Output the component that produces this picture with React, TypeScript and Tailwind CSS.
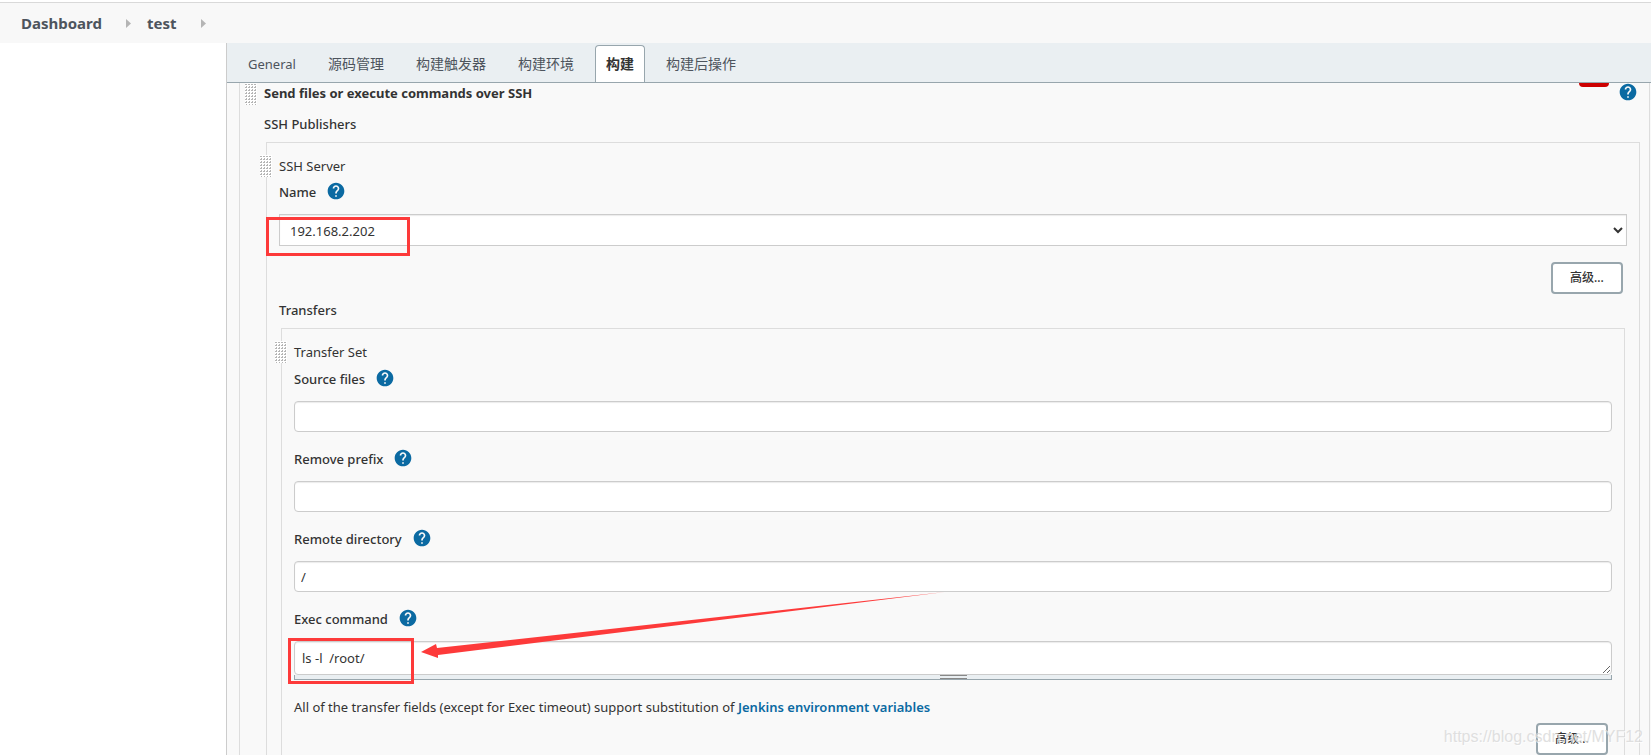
import { useId, useState } from 'react'
import type { ReactNode } from 'react'
import { MdHelp } from 'react-icons/md'

const TABS = ['General', '源码管理', '构建触发器', '构建环境', '构建', '构建后操作']

export default function App() {
    const [activeTab, setActiveTab] = useState('构建')

    return (
        <div className="flex flex-col h-screen overflow-hidden bg-white pt-0.5 font-['Noto_Sans','Noto_Sans_CJK_SC',sans-serif] text-[13px] leading-5 text-[#333]">
            <Breadcrumbs />
            <div className="flex flex-1 min-h-0">
                <aside className="w-[226px] shrink-0" />
                <main className="flex flex-col flex-1 min-w-0 border-l border-[#ccc] bg-[#f9f9f9]">
                    <div role="tablist" className="flex shrink-0 h-10 items-end gap-2.5 border-b border-[#98a6ad] bg-[#eaeff2] px-2.5">
                        {TABS.map((tab) => (
                            <button
                                key={tab}
                                role="tab"
                                aria-selected={tab === activeTab}
                                onClick={() => setActiveTab(tab)}
                                className={`h-[37px] px-2.5 border border-b-0 ${tab === 'General' ? 'text-[13px]' : 'text-sm'} ${
                                    tab === activeTab
                                        ? 'rounded-t border-[#98a6ad] bg-white font-bold text-[#333]'
                                        : 'border-transparent text-[#4d545d]'
                                }`}
                            >
                                {tab}
                            </button>
                        ))}
                    </div>
                    <div className="flex-1 min-h-0 overflow-hidden pl-3 pr-px">
                        <SshBuildStep />
                    </div>
                </main>
            </div>
            <div className="absolute right-2 bottom-1 font-['Liberation_Sans',sans-serif] text-base leading-7 text-[#d9d9d9] opacity-80 [text-shadow:1px_1px_0_#fff] pointer-events-none">
                https://blog.csdn.net/MYF12
            </div>
        </div>
    )
}

const Breadcrumbs = () => (
    <nav className="flex shrink-0 h-[41px] items-center border-t border-[#d9d9d9] bg-[#f8f8f8] px-[21px] text-[15px] font-bold text-[#4d545d]">
        <a href="#dashboard">Dashboard</a>
        <Separator />
        <a href="#test">test</a>
        <Separator />
    </nav>
)

const Separator = () => (
    <svg className="ml-6 mr-4 w-[5px] h-[9px]" viewBox="0 0 5 9" fill="#b5b5b5">
        <path d="M0 0 5 4.5 0 9z" />
    </svg>
)

const SshBuildStep = () => {
    const serverId = useId()

    return (
        <section className="relative min-h-full border-x border-[#ddd] pl-6 pr-[9px]">
            <DragHandle className="absolute left-[5px] top-0" />
            <div className="absolute right-10 top-0 w-[30px] h-1 rounded-b bg-[#c00]" />
            <div className="flex items-start justify-between">
                <h2 className="font-bold">Send files or execute commands over SSH</h2>
                <HelpButton className="mr-0.5" />
            </div>
            <h3 className="mt-[11px] font-medium">SSH Publishers</h3>

            <Panel className="mt-2 ml-0.5 pr-3">
                <p>SSH Server</p>
                <FieldLabel htmlFor={serverId} className="mt-1.5">
                    Name
                </FieldLabel>
                <div className="relative mt-3">
                    <select id={serverId} className="block w-full h-8 border border-[#ccc] bg-white pl-1.5 pr-1 pt-0.5 shadow-[inset_0_1px_1px_rgba(0,0,0,0.08)]">
                        <option>192.168.2.202</option>
                    </select>
                    <div className="absolute -left-[13px] top-[3px] w-36 h-[39px] border-3 border-[#fd3a3a] pointer-events-none" />
                </div>
                <AdvancedButton className="mt-4" />
                <h3 className="mt-1.5 font-medium">Transfers</h3>
                <div className="mt-2 mx-0.5">
                    <TransferSet />
                </div>
            </Panel>
        </section>
    )
}

const TransferSet = () => {
    const commandId = useId()

    return (
        <Panel className="pr-3">
            <p>Transfer Set</p>
            <TextField label="Source files" className="mt-[7px]" />
            <TextField label="Remove prefix" className="mt-[17px]" />
            <TextField label="Remote directory" value="/" className="mt-[17px]" />
            <FieldLabel htmlFor={commandId} className="mt-[17px]">
                Exec command
            </FieldLabel>
            <div className="relative mt-3">
                <textarea
                    id={commandId}
                    defaultValue="ls -l  /root/"
                    rows={1}
                    className="block w-full h-[34px] resize overflow-hidden rounded border border-[#ccc] bg-white px-[7px] py-1.5 shadow-[inset_0_1px_1px_rgba(0,0,0,0.08)]"
                />
                <div className="flex justify-center h-[5px] border border-t-0 border-[#98a6ad] bg-[#eaeff2]">
                    <div className="w-[27px] h-1 border-y border-[#888]" />
                </div>
                <div className="absolute -left-1.5 -top-[3px] w-[126px] h-[46px] border-3 border-[#fd3a3a] pointer-events-none" />
                <svg className="absolute left-[127px] -top-[49px] w-[524px] h-[66px] pointer-events-none" viewBox="0 0 524 66" fill="#fd3a3a">
                    <path d="M0 60 15 52 16 56 524 0 17 63 17 66z" />
                </svg>
            </div>
            <p className="mt-[17px]">
                All of the transfer fields (except for Exec timeout) support substitution of{' '}
                <a href="#env-vars" className="font-semibold text-[#0b6aa2]">
                    Jenkins environment variables
                </a>
            </p>
            <AdvancedButton className="mt-1.5" />
        </Panel>
    )
}

const Panel = ({ className = '', children }: { className?: string; children: ReactNode }) => (
    <div className={`relative border border-b-0 border-[#ddd] pl-3 pt-[13px] ${className}`}>
        <DragHandle className="absolute -left-[7px] top-3" />
        {children}
    </div>
)

const TextField = ({ label, value = '', className = '' }: { label: string; value?: string; className?: string }) => {
    const id = useId()

    return (
        <div className={className}>
            <FieldLabel htmlFor={id}>{label}</FieldLabel>
            <input
                id={id}
                type="text"
                defaultValue={value}
                className="block mt-3 w-full h-[31px] rounded border border-[#ccc] bg-white px-1.5 shadow-[inset_0_1px_1px_rgba(0,0,0,0.08)]"
            />
        </div>
    )
}

const FieldLabel = ({ htmlFor, className = '', children }: { htmlFor: string; className?: string; children: ReactNode }) => (
    <div className={`flex items-start gap-2.5 ${className}`}>
        <label htmlFor={htmlFor} className="font-medium">
            {children}
        </label>
        <HelpButton />
    </div>
)

const HelpButton = ({ className = '' }: { className?: string }) => (
    <button aria-label="Help" className={`-mt-px mb-px text-[#0b6aa2] ${className}`}>
        <MdHelp className="w-5 h-5" />
    </button>
)

const AdvancedButton = ({ className = '' }: { className?: string }) => (
    <div className={`flex justify-end pr-1 ${className}`}>
        <button className="w-[72px] h-8 rounded border-2 border-[#98a6ad] bg-white text-xs font-medium">高级...</button>
    </div>
)

// 4 x 7 grid of grip dots
const DragHandle = ({ className = '' }: { className?: string }) => {
    const id = useId()

    return (
        <svg className={`w-3 h-[22px] bg-white ${className}`}>
            <pattern id={id} width="3" height="3" patternUnits="userSpaceOnUse">
                <path d="M1 0h1v2h-2v-1h1z" fill="#b5b5b5" />
            </pattern>
            <rect width="12" height="21" y="1" fill={`url(#${id})`} />
        </svg>
    )
}
